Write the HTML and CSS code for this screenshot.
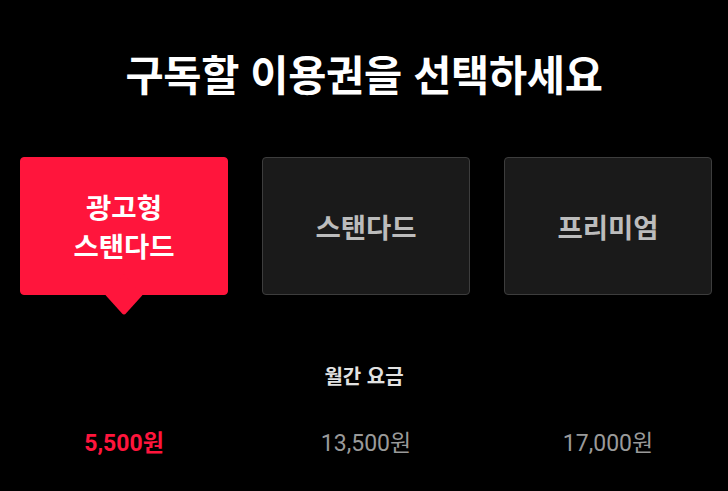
FILE: index.html
```html
<!DOCTYPE html>
<html lang="ko">
<head>
<meta charset="utf-8">
<title>이용권 선택</title>
<link rel="stylesheet" href="styles.css">
</head>
<body>
<main class="page">
  <h1 class="title">구독할 이용권을 선택하세요</h1>
  <div class="plans">
    <button class="plan plan--selected" type="button">광고형<br>스탠다드</button>
    <button class="plan" type="button">스탠다드</button>
    <button class="plan" type="button">프리미엄</button>
  </div>
  <section class="pricing">
    <h2 class="row-label">월간 요금</h2>
    <div class="price-row">
      <span class="price price--selected">5,500원</span>
      <span class="price">13,500원</span>
      <span class="price">17,000원</span>
    </div>
  </section>
</main>
</body>
</html>
```

FILE: styles.css
```css
* {
  box-sizing: border-box;
}

html, body {
  margin: 0;
  padding: 0;
  background: #000;
}

body {
  font-family: "Roboto", "Noto Sans CJK KR", sans-serif;
  color: #fff;
  width: 728px;
  height: 491px;
  overflow: hidden;
}

.page {
  display: flex;
  flex-direction: column;
  padding: 48px 0 0 0;
}

.title {
  margin: 0;
  text-align: center;
  font-family: "Noto Sans CJK KR", sans-serif;
  font-size: 41.5px;
  font-weight: 700;
  line-height: 50px;
  letter-spacing: -0.3px;
  color: #fff;
}

.plans {
  display: grid;
  grid-template-columns: repeat(3, 208px);
  column-gap: 34px;
  padding-left: 20px;
  margin-top: 59px;
}

.plan {
  position: relative;
  height: 138px;
  margin: 0;
  padding: 0;
  display: flex;
  align-items: center;
  justify-content: center;
  background: #1a1a1a;
  border: 1px solid #3d3d3d;
  border-radius: 4px;
  color: #bcbcbc;
  font-family: "Noto Sans CJK KR", sans-serif;
  font-size: 27.5px;
  font-weight: 700;
  line-height: 39px;
  text-align: center;
  cursor: pointer;
}

.plan--selected {
  background: #ff153c;
  border-color: #ff153c;
  color: #fff;
}

.plan--selected::after {
  content: "";
  position: absolute;
  left: 50%;
  bottom: -13px;
  width: 25.5px;
  height: 25.5px;
  background: #ff153c;
  border-bottom-right-radius: 3px;
  transform: translateX(-50%) scaleY(1.12) rotate(45deg);
}

.pricing {
  display: flex;
  flex-direction: column;
  margin-top: 67px;
}

.row-label {
  margin: 0;
  text-align: center;
  font-family: "Noto Sans CJK KR", sans-serif;
  font-size: 20px;
  font-weight: 700;
  line-height: 28px;
  color: #e2e2e2;
}

.price-row {
  display: grid;
  grid-template-columns: repeat(3, 208px);
  column-gap: 34px;
  padding-left: 20px;
  margin-top: 39px;
}

.price {
  text-align: center;
  font-size: 23px;
  font-weight: 400;
  line-height: 30px;
  color: #9a9a9a;
}

.price--selected {
  color: #ff153c;
  font-weight: 700;
}
```
